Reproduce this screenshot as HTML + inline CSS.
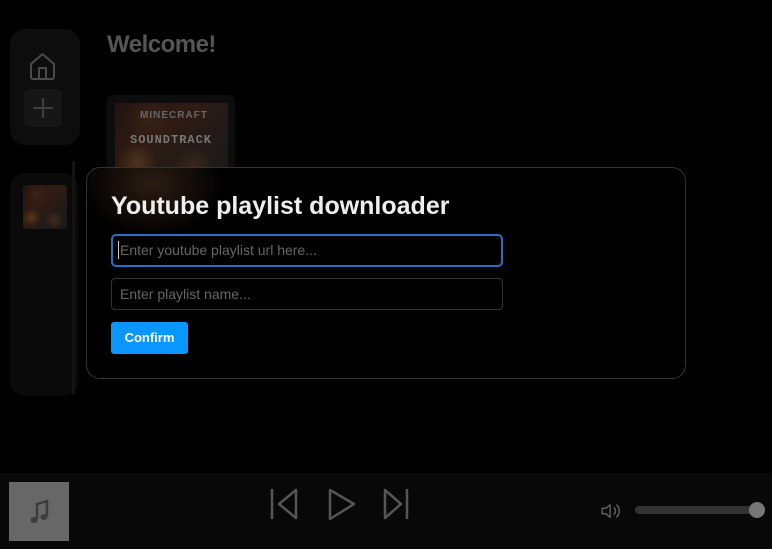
<!DOCTYPE html>
<html><head><meta charset="utf-8"><style>
*{box-sizing:border-box;margin:0;padding:0}
body{width:772px;height:549px;background:#000;overflow:hidden;position:relative;font-family:"Liberation Sans",sans-serif}
.abs{position:absolute}
.art{background:
 radial-gradient(circle at 20% 75%,#a0652e 0,transparent 18%),
 radial-gradient(circle at 70% 80%,#7a4a30 0,transparent 20%),
 radial-gradient(circle at 30% 20%,#6a3a22 0,transparent 25%),
 linear-gradient(135deg,#3a1e14,#5a2e1c 40%,#3b2a26 70%,#2a2a2a);}
</style></head><body>
<div class="abs" style="left:10px;top:29px;width:70px;height:116px;background:#0d0d0d;border-radius:15px"></div>
<svg class="abs" style="left:29px;top:52px" width="27" height="29" viewBox="0 0 27 29"><path d="M2 12 L13.5 2 L25 12 V25 a2 2 0 0 1 -2 2 H4 a2 2 0 0 1 -2 -2 Z M10 27 V16 h7 v11" fill="none" stroke="#4a4a4a" stroke-width="2" stroke-linejoin="round"/></svg>
<div class="abs" style="left:24px;top:89px;width:38px;height:38px;background:#161616;border-radius:5px"></div>
<svg class="abs" style="left:33px;top:98px" width="20" height="20"><path d="M10 0V20M0 10H20" stroke="#3e3e3e" stroke-width="2"/></svg>
<div class="abs" style="left:10px;top:173px;width:68px;height:223px;background:#0b0a0a;border-radius:15px"></div>
<div class="abs" style="left:72px;top:161px;width:3px;height:233px;background:#16120f"></div>
<div class="abs art" style="left:23px;top:185px;width:44px;height:44px;border-radius:3px;opacity:.5"></div>
<div class="abs" style="left:107px;top:31px;font-size:24px;font-weight:bold;color:#555;letter-spacing:-0.5px">Welcome!</div>
<div class="abs" style="left:107px;top:95px;width:128px;height:100px;background:#0d0d0d;border-radius:5px"></div>
<div class="abs art" style="left:115px;top:103px;width:113px;height:80px;opacity:.45"></div>
<div class="abs" style="left:140px;top:110px;font-size:10px;font-weight:bold;color:#666;letter-spacing:1px">MINECRAFT</div>
<div class="abs" style="left:130px;top:133px;font-size:12px;font-weight:bold;color:#777;letter-spacing:1px;font-family:'Liberation Mono',monospace">SOUNDTRACK</div>
<div class="abs" style="left:86px;top:167px;width:600px;height:212px;background:#000;border:1px solid #333;border-radius:14px;overflow:hidden">
 <div class="abs" style="left:-10px;top:-20px;width:150px;height:90px;background:radial-gradient(ellipse at 50% 40%,rgba(110,70,45,.4),transparent 70%)"></div>
</div>
<div class="abs" style="left:111px;top:192px;font-size:25px;font-weight:bold;color:#eee">Youtube playlist downloader</div>
<div class="abs" style="left:111px;top:234px;width:392px;height:33px;border:2px solid #2a6fc0;border-radius:5px;font-size:14px;color:#666;padding:6px 0 0 7px">Enter youtube playlist url here...</div>
<div class="abs" style="left:118px;top:241px;width:1px;height:18px;background:#ccc"></div>
<div class="abs" style="left:111px;top:278px;width:392px;height:32px;border:1px solid #333;border-radius:4px;font-size:14px;color:#666;padding:7px 0 0 8px">Enter playlist name...</div>
<div class="abs" style="left:111px;top:322px;width:77px;height:32px;background:#0a96ff;border-radius:3px;font-size:13px;font-weight:bold;color:#fff;text-align:center;line-height:32px">Confirm</div>
<div class="abs" style="left:0;top:473px;width:772px;height:76px;background:#080808"></div>
<div class="abs" style="left:9px;top:482px;width:60px;height:59px;background:#676767"></div>
<svg class="abs" style="left:28px;top:499px" width="22" height="26" viewBox="0 0 22 26"><path d="M9 20V5l10-3v15" fill="none" stroke="#3d3d3d" stroke-width="2.5"/><ellipse cx="6" cy="21" rx="3.5" ry="3" fill="#3d3d3d"/><ellipse cx="16" cy="18" rx="3.5" ry="3" fill="#3d3d3d"/></svg>
<svg class="abs" style="left:268px;top:487px" width="145" height="35" viewBox="0 0 145 35"><g fill="none" stroke="#555" stroke-width="2.5" stroke-linejoin="round"><path d="M4 2V32"/><path d="M28 3V31L11 17Z"/><path d="M62 3V32L86 17Z"/><path d="M117 3V31L133 17Z"/><path d="M139 2V32"/></g></svg>
<svg class="abs" style="left:601px;top:503px" width="20" height="16" viewBox="0 0 22 18"><path d="M1 6h4l5-4v14l-5-4H1z" fill="none" stroke="#666" stroke-width="1.5" stroke-linejoin="round"/><path d="M14 5a5 5 0 0 1 0 8M17 2a9 9 0 0 1 0 14" fill="none" stroke="#666" stroke-width="1.5"/></svg>
<div class="abs" style="left:635px;top:506px;width:125px;height:8px;background:#333;border-radius:4px"></div>
<div class="abs" style="left:749px;top:502px;width:16px;height:16px;background:#777;border-radius:50%"></div>
</body></html>
